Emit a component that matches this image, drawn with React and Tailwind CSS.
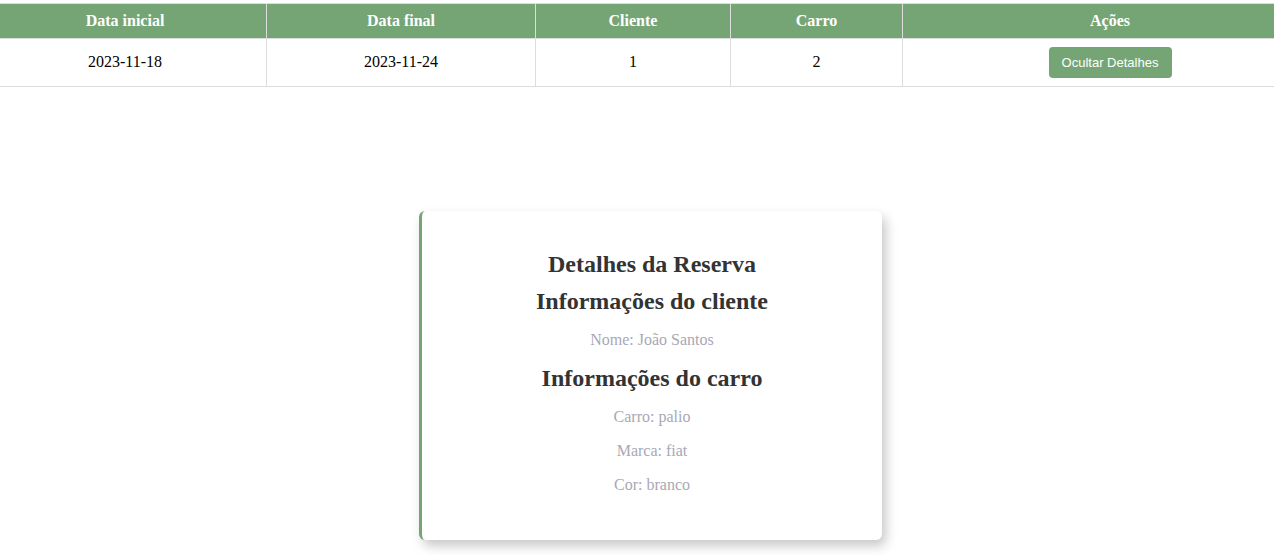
const reserva = {
  dataInicial: "2023-11-18",
  dataFinal: "2023-11-24",
  cliente: 1,
  carro: 2,
};

const App = () => {
  const cell = "flex items-center justify-center border-r border-[#dddddd]";

  return (
    <div className="w-[1274px] h-[555px] overflow-hidden bg-white font-['Liberation_Serif',serif] text-[16px]">
      <div className="pt-[3px] w-[1333px] ml-[-16px]">
        <div className="grid grid-cols-[283px_269px_195px_172px_1fr] border-t border-b border-[#dddddd]">
          <div className={`${cell} h-[35px] bg-[#75a575] text-white font-bold border-b`}>Data inicial</div>
          <div className={`${cell} h-[35px] bg-[#75a575] text-white font-bold border-b`}>Data final</div>
          <div className={`${cell} h-[35px] bg-[#75a575] text-white font-bold border-b`}>Cliente</div>
          <div className={`${cell} h-[35px] bg-[#75a575] text-white font-bold border-b`}>Carro</div>
          <div className={`${cell} h-[35px] bg-[#75a575] text-white font-bold border-b border-r-0`}>Ações</div>

          <div className={`${cell} h-[47px] pb-[2px] text-black`}>{reserva.dataInicial}</div>
          <div className={`${cell} h-[47px] pb-[2px] text-black`}>{reserva.dataFinal}</div>
          <div className={`${cell} h-[47px] pb-[2px] text-black`}>{reserva.cliente}</div>
          <div className={`${cell} h-[47px] pb-[2px] text-black`}>{reserva.carro}</div>
          <div className={`${cell} h-[47px] border-r-0`}>
            <button className="w-[123px] h-[31px] rounded-[4px] bg-[#75a575] text-white text-[13px] font-['Liberation_Sans',Arial,sans-serif]">
              Ocultar Detalhes
            </button>
          </div>
        </div>
      </div>

      {/* Detalhes card */}
      <div className="pl-[419px] pt-[124px]">
        <div className="w-[463px] h-[329px] bg-white rounded-[6px] border-l-[3px] border-[#75a575] shadow-[4px_6px_12px_rgba(0,0,0,0.22)] flex flex-col items-center pt-[39px] text-center">
          <h2 className="text-[24px] font-bold text-[#333333] leading-[28px]">Detalhes da Reserva</h2>
          <h2 className="mt-[9px] text-[24px] font-bold text-[#333333] leading-[28px]">Informações do cliente</h2>
          <p className="mt-[16px] text-[#a8a8b5] leading-[18px]">Nome: João Santos</p>
          <h2 className="mt-[15px] text-[24px] font-bold text-[#333333] leading-[28px]">Informações do carro</h2>
          <p className="mt-[16px] text-[#a8a8b5] leading-[18px]">Carro: palio</p>
          <p className="mt-[16px] text-[#a8a8b5] leading-[18px]">Marca: fiat</p>
          <p className="mt-[16px] text-[#a8a8b5] leading-[18px]">Cor: branco</p>
        </div>
      </div>
    </div>
  );
};

export default App;
